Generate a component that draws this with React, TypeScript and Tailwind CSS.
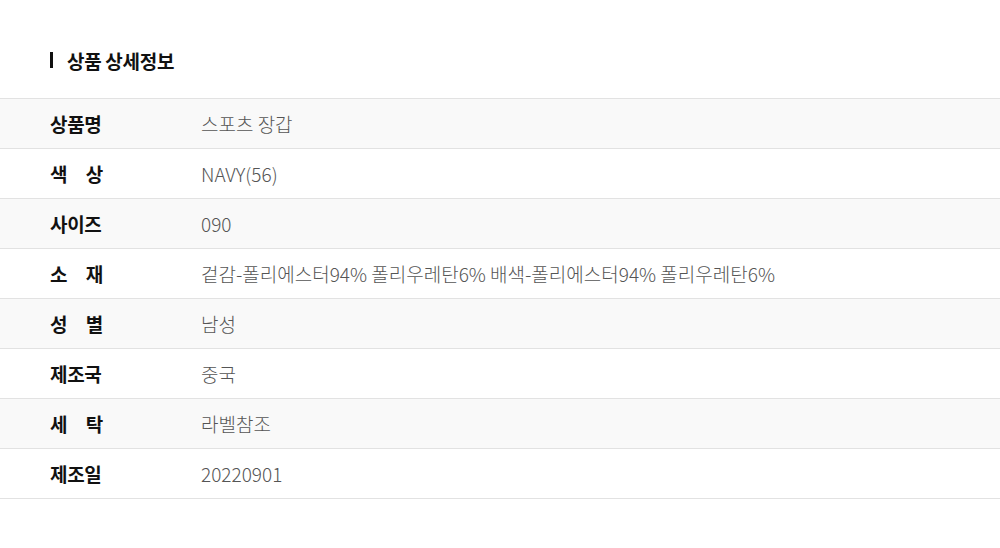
const rows: { label: string[]; value: string }[] = [
  { label: ["상품명"], value: "스포츠 장갑" },
  { label: ["색", "상"], value: "NAVY(56)" },
  { label: ["사이즈"], value: "090" },
  { label: ["소", "재"], value: "겉감-폴리에스터94% 폴리우레탄6% 배색-폴리에스터94% 폴리우레탄6%" },
  { label: ["성", "별"], value: "남성" },
  { label: ["제조국"], value: "중국" },
  { label: ["세", "탁"], value: "라벨참조" },
  { label: ["제조일"], value: "20220901" },
];

export default function App() {
  return (
    <div
      className="w-[1000px] h-[548px] bg-white pt-[49px]"
      style={{ fontFamily: '"Noto Sans CJK KR", "Noto Sans", sans-serif' }}
    >
      <div className="flex items-center px-[50px] h-[22px]">
        <span className="w-[3px] h-[16px] bg-[#111]" />
        <h2 className="ml-[14px] text-[19px] font-bold text-[#111] leading-none tracking-[-0.3px]">
          상품 상세정보
        </h2>
      </div>

      <div className="mt-[27px] border-t border-[#e2e2e2]">
        {rows.map((row, i) => (
          <div
            key={i}
            className={`flex items-center h-[50px] border-b border-[#e2e2e2] px-[50px] ${
              i % 2 === 0 ? "bg-[#f9f9f9]" : "bg-white"
            }`}
          >
            <div className="w-[151px] shrink-0">
              <div className="w-[53px] flex justify-between whitespace-nowrap text-[19px] font-bold text-[#111] leading-none tracking-[-0.3px]">
                {row.label.map((t) => (
                  <span key={t}>{t}</span>
                ))}
              </div>
            </div>
            <div className="text-[19px] font-light text-[#555] leading-none">
              {row.value}
            </div>
          </div>
        ))}
      </div>
    </div>
  );
}
